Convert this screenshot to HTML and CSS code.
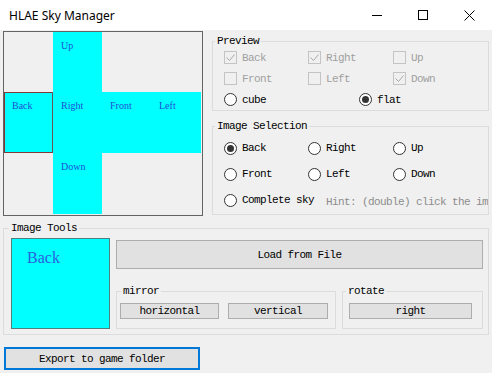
FILE: index.html
```html
<!DOCTYPE html>
<html lang="en">
<head>
    <meta charset="UTF-8">
    <title>HLAE Sky Manager</title>
    <link rel="stylesheet" href="styles.css">
</head>
<body>
<div class="window">
    <div class="titlebar">
        <span class="title">HLAE Sky Manager</span>
        <div class="caption-buttons">
            <span class="cap-btn"><svg width="10" height="10" viewBox="0 0 10 10"><path d="M0 5.5H10" stroke="#000" stroke-width="1"/></svg></span>
            <span class="cap-btn"><svg width="10" height="10" viewBox="0 0 10 10"><rect x="0.5" y="0.5" width="9" height="9" fill="none" stroke="#000" stroke-width="1"/></svg></span>
            <span class="cap-btn"><svg width="11" height="11" viewBox="0 0 11 11"><path d="M0.5 0.5L10.5 10.5M10.5 0.5L0.5 10.5" stroke="#000" stroke-width="1"/></svg></span>
        </div>
    </div>

    <div class="content">
        <div class="top-row">
            <!-- sky box preview, laid out as a flat cross -->
            <div class="sky-canvas">
                <div class="face face-up">Up</div>
                <div class="face face-back selected">Back</div>
                <div class="face face-right">Right</div>
                <div class="face face-front">Front</div>
                <div class="face face-left">Left</div>
                <div class="face face-down">Down</div>
            </div>

            <div class="side">
                <fieldset class="group">
                    <legend>Preview</legend>
                    <div class="preview-body">
                        <div class="opt-row">
                            <label class="opt disabled"><span class="check on"><svg width="11" height="11" viewBox="0 0 11 11"><path d="M1.5 5.5L4.5 8.5L9.5 2.5" fill="none" stroke="#a8a8a8" stroke-width="1"/></svg></span>Back</label>
                            <label class="opt disabled"><span class="check on"><svg width="11" height="11" viewBox="0 0 11 11"><path d="M1.5 5.5L4.5 8.5L9.5 2.5" fill="none" stroke="#a8a8a8" stroke-width="1"/></svg></span>Right</label>
                            <label class="opt disabled"><span class="check"></span>Up</label>
                        </div>
                        <div class="opt-row">
                            <label class="opt disabled"><span class="check"></span>Front</label>
                            <label class="opt disabled"><span class="check"></span>Left</label>
                            <label class="opt disabled"><span class="check on"><svg width="11" height="11" viewBox="0 0 11 11"><path d="M1.5 5.5L4.5 8.5L9.5 2.5" fill="none" stroke="#a8a8a8" stroke-width="1"/></svg></span>Down</label>
                        </div>
                        <div class="opt-row mode-row">
                            <label class="opt"><span class="radio"></span>cube</label>
                            <label class="opt"><span class="radio on"></span>flat</label>
                        </div>
                    </div>
                </fieldset>

                <fieldset class="group selection-group">
                    <legend>Image Selection</legend>
                    <div class="selection-body">
                        <div class="opt-row sel-row">
                            <label class="opt"><span class="radio on"></span>Back</label>
                            <label class="opt"><span class="radio"></span>Right</label>
                            <label class="opt"><span class="radio"></span>Up</label>
                        </div>
                        <div class="opt-row sel-row">
                            <label class="opt"><span class="radio"></span>Front</label>
                            <label class="opt"><span class="radio"></span>Left</label>
                            <label class="opt"><span class="radio"></span>Down</label>
                        </div>
                        <div class="opt-row sel-row hint-row">
                            <label class="opt"><span class="radio"></span>Complete sky</label>
                            <span class="hint">Hint: (double) click the image to select</span>
                        </div>
                    </div>
                </fieldset>
            </div>
        </div>

        <fieldset class="group tools-group">
            <legend>Image Tools</legend>
            <div class="tools-body">
                <div class="face-preview">Back</div>
                <div class="tools-right">
                    <button class="btn load-btn">Load from File</button>
                    <div class="tool-groups">
                        <fieldset class="group mirror-group">
                            <legend>mirror</legend>
                            <div class="mirror-body">
                                <button class="btn small-btn btn-horizontal">horizontal</button>
                                <button class="btn small-btn btn-vertical">vertical</button>
                            </div>
                        </fieldset>
                        <fieldset class="group rotate-group">
                            <legend>rotate</legend>
                            <div class="rotate-body">
                                <button class="btn small-btn btn-right">right</button>
                            </div>
                        </fieldset>
                    </div>
                </div>
            </div>
        </fieldset>

        <button class="btn export-btn">Export to game folder</button>
    </div>
</div>
</body>
</html>
```

FILE: styles.css
```css
*{
    margin: 0;
    padding: 0;
    box-sizing: border-box;
}
body{
    background: #f0f0f0;
    font-family: "Liberation Mono", "DejaVu Sans Mono", monospace;
    font-size: 11px;
    letter-spacing: -0.6px;
    color: #000;
}
.window{
    width: 492px;
    height: 373px;
    overflow: hidden;
}

/* title bar */
.titlebar{
    height: 30px;
    background: #fff;
    display: flex;
    align-items: center;
    justify-content: space-between;
}
.title{
    font-family: "Noto Sans", "Open Sans", sans-serif;
    font-size: 12px;
    letter-spacing: 0;
    padding-left: 9px;
}
.caption-buttons{
    display: flex;
    align-self: stretch;
}
.cap-btn{
    width: 46px;
    display: flex;
    align-items: center;
    justify-content: center;
}
.cap-btn svg{
    display: block;
}

.content{
    padding: 1px 3px 0 3px;
}
.top-row{
    display: flex;
    align-items: flex-start;
}

/* sky canvas */
.sky-canvas{
    width: 200px;
    height: 185px;
    border: 1px solid #646464;
    display: grid;
    grid-template-columns: 49px 49px 49px 50px;
    grid-template-rows: 60px 61px 61px;
}
.face{
    background: #00ffff;
    font-family: "Liberation Serif", serif;
    font-size: 10px;
    letter-spacing: 0;
    color: #1f4fd6;
    padding: 8px 8px;
}
.face-up{ grid-column: 2; grid-row: 1; }
.face-back{ grid-column: 1; grid-row: 2; }
.face-right{ grid-column: 2; grid-row: 2; }
.face-front{ grid-column: 3; grid-row: 2; }
.face-left{ grid-column: 4; grid-row: 2; }
.face-down{ grid-column: 2; grid-row: 3; }
.face.selected{
    border: 1px solid #7e3a3a;
    border-right-color: #6a5656;
    padding: 7px 7px;
}

/* group boxes */
.group{
    border: 1px solid #dcdcdc;
    padding: 0;
    min-width: 0;
}
.group legend{
    line-height: 12px;
    padding: 0 2px;
    margin-left: 2px;
}

.side{
    margin-left: 9px;
    width: 277px;
    padding-top: 4px;
}
.preview-body{
    padding-left: 11px;
}
.opt-row{
    display: grid;
    grid-template-columns: 84px 85px auto;
    height: 21px;
    align-items: center;
}
.opt-row.mode-row{
    grid-template-columns: 135px auto;
}
.selection-group{
    margin-top: 9px;
}
.selection-body{
    padding: 3px 0 1px 11px;
}
.opt-row.sel-row{
    height: 26px;
}
.opt-row.hint-row{
    grid-template-columns: 102px auto;
    overflow: hidden;
    white-space: nowrap;
}
.opt{
    display: flex;
    align-items: center;
    gap: 5px;
    white-space: nowrap;
}
.opt.disabled{
    color: #a0a0a0;
}
.hint{
    color: #8c8c8c;
    padding-top: 3px;
}

.check{
    width: 13px;
    height: 13px;
    border: 1px solid #c4c4c4;
    background: #f0f0f0;
    display: flex;
    align-items: center;
    justify-content: center;
    flex-shrink: 0;
}
.check svg{
    display: block;
}
.radio{
    width: 13px;
    height: 13px;
    border: 1px solid #333;
    border-radius: 50%;
    background: #fff;
    display: flex;
    align-items: center;
    justify-content: center;
    flex-shrink: 0;
}
.radio.on::after{
    content: "";
    width: 7px;
    height: 7px;
    border-radius: 50%;
    background: #333;
}

/* image tools */
.tools-group{
    margin-top: 6px;
}
.tools-group legend{
    margin-left: 5px;
}
.tools-body{
    display: flex;
    align-items: flex-start;
    padding: 4px 0 5px 7px;
}
.face-preview{
    width: 99px;
    height: 91px;
    background: #00ffff;
    border: 1px solid #4f7f7f;
    font-family: "Liberation Serif", serif;
    font-size: 16px;
    letter-spacing: 0;
    color: #2a62e0;
    padding: 10px 0 0 15px;
}
.tools-right{
    margin-left: 6px;
    width: 367px;
    padding-top: 2px;
}
.btn{
    display: block;
    background: #e1e1e1;
    border: 1px solid #adadad;
    font-family: inherit;
    font-size: inherit;
    letter-spacing: inherit;
    color: #000;
    text-align: center;
}
.load-btn{
    width: 367px;
    height: 29px;
}
.tool-groups{
    display: flex;
    margin-top: 16px;
}
.mirror-group{
    width: 220px;
}
.mirror-group legend{
    margin-left: 4px;
}
.rotate-group{
    width: 141px;
    margin-left: 6px;
}
.rotate-group legend{
    margin-left: 3px;
}
.mirror-body{
    display: flex;
    gap: 9px;
    padding: 6px 0 9px 3px;
}
.rotate-body{
    padding: 6px 0 9px 6px;
}
.small-btn{
    height: 16px;
    line-height: 14px;
}
.btn-horizontal{
    width: 99px;
}
.btn-vertical{
    width: 100px;
}
.btn-right{
    width: 123px;
}

.export-btn{
    margin: 12px 0 0 1px;
    width: 196px;
    height: 23px;
    border: 2px solid #0078d7;
}
```
